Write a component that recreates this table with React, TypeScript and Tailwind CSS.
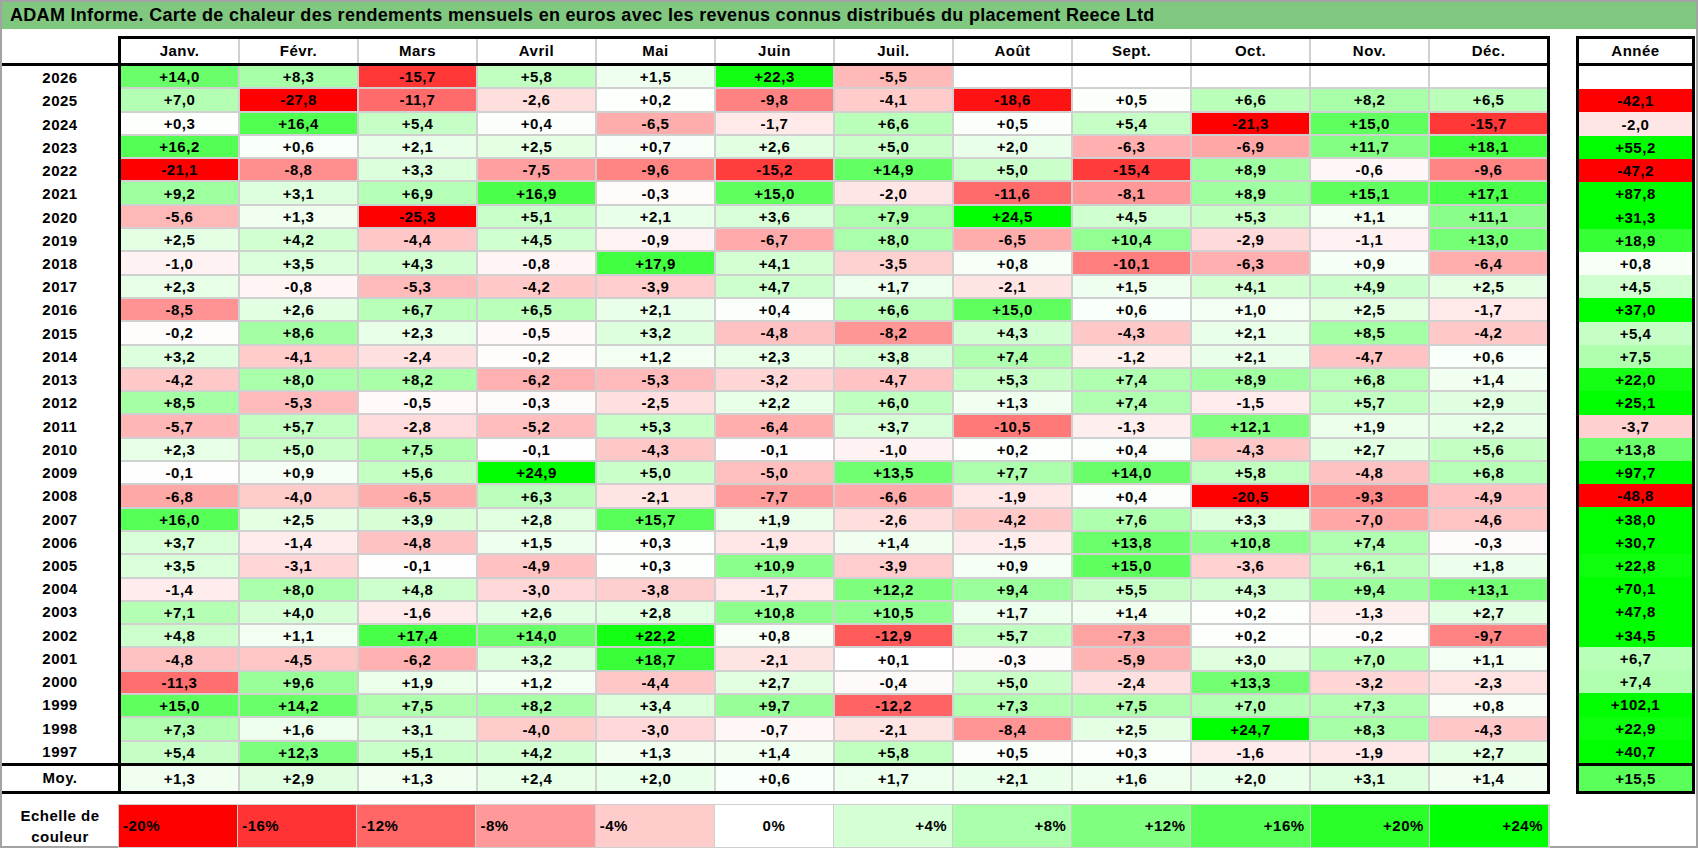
import React from "react";

const MONTHS = ["Janv.", "Févr.", "Mars", "Avril", "Mai", "Juin", "Juil.", "Août", "Sept.", "Oct.", "Nov.", "Déc."];

// year, 12 monthly values, yearly total (null = no data)
const ROWS: [string, (number | null)[], number | null][] = [
  ["2026", [14.0, 8.3, -15.7, 5.8, 1.5, 22.3, -5.5, null, null, null, null, null], null],
  ["2025", [7.0, -27.8, -11.7, -2.6, 0.2, -9.8, -4.1, -18.6, 0.5, 6.6, 8.2, 6.5], -42.1],
  ["2024", [0.3, 16.4, 5.4, 0.4, -6.5, -1.7, 6.6, 0.5, 5.4, -21.3, 15.0, -15.7], -2.0],
  ["2023", [16.2, 0.6, 2.1, 2.5, 0.7, 2.6, 5.0, 2.0, -6.3, -6.9, 11.7, 18.1], 55.2],
  ["2022", [-21.1, -8.8, 3.3, -7.5, -9.6, -15.2, 14.9, 5.0, -15.4, 8.9, -0.6, -9.6], -47.2],
  ["2021", [9.2, 3.1, 6.9, 16.9, -0.3, 15.0, -2.0, -11.6, -8.1, 8.9, 15.1, 17.1], 87.8],
  ["2020", [-5.6, 1.3, -25.3, 5.1, 2.1, 3.6, 7.9, 24.5, 4.5, 5.3, 1.1, 11.1], 31.3],
  ["2019", [2.5, 4.2, -4.4, 4.5, -0.9, -6.7, 8.0, -6.5, 10.4, -2.9, -1.1, 13.0], 18.9],
  ["2018", [-1.0, 3.5, 4.3, -0.8, 17.9, 4.1, -3.5, 0.8, -10.1, -6.3, 0.9, -6.4], 0.8],
  ["2017", [2.3, -0.8, -5.3, -4.2, -3.9, 4.7, 1.7, -2.1, 1.5, 4.1, 4.9, 2.5], 4.5],
  ["2016", [-8.5, 2.6, 6.7, 6.5, 2.1, 0.4, 6.6, 15.0, 0.6, 1.0, 2.5, -1.7], 37.0],
  ["2015", [-0.2, 8.6, 2.3, -0.5, 3.2, -4.8, -8.2, 4.3, -4.3, 2.1, 8.5, -4.2], 5.4],
  ["2014", [3.2, -4.1, -2.4, -0.2, 1.2, 2.3, 3.8, 7.4, -1.2, 2.1, -4.7, 0.6], 7.5],
  ["2013", [-4.2, 8.0, 8.2, -6.2, -5.3, -3.2, -4.7, 5.3, 7.4, 8.9, 6.8, 1.4], 22.0],
  ["2012", [8.5, -5.3, -0.5, -0.3, -2.5, 2.2, 6.0, 1.3, 7.4, -1.5, 5.7, 2.9], 25.1],
  ["2011", [-5.7, 5.7, -2.8, -5.2, 5.3, -6.4, 3.7, -10.5, -1.3, 12.1, 1.9, 2.2], -3.7],
  ["2010", [2.3, 5.0, 7.5, -0.1, -4.3, -0.1, -1.0, 0.2, 0.4, -4.3, 2.7, 5.6], 13.8],
  ["2009", [-0.1, 0.9, 5.6, 24.9, 5.0, -5.0, 13.5, 7.7, 14.0, 5.8, -4.8, 6.8], 97.7],
  ["2008", [-6.8, -4.0, -6.5, 6.3, -2.1, -7.7, -6.6, -1.9, 0.4, -20.5, -9.3, -4.9], -48.8],
  ["2007", [16.0, 2.5, 3.9, 2.8, 15.7, 1.9, -2.6, -4.2, 7.6, 3.3, -7.0, -4.6], 38.0],
  ["2006", [3.7, -1.4, -4.8, 1.5, 0.3, -1.9, 1.4, -1.5, 13.8, 10.8, 7.4, -0.3], 30.7],
  ["2005", [3.5, -3.1, -0.1, -4.9, 0.3, 10.9, -3.9, 0.9, 15.0, -3.6, 6.1, 1.8], 22.8],
  ["2004", [-1.4, 8.0, 4.8, -3.0, -3.8, -1.7, 12.2, 9.4, 5.5, 4.3, 9.4, 13.1], 70.1],
  ["2003", [7.1, 4.0, -1.6, 2.6, 2.8, 10.8, 10.5, 1.7, 1.4, 0.2, -1.3, 2.7], 47.8],
  ["2002", [4.8, 1.1, 17.4, 14.0, 22.2, 0.8, -12.9, 5.7, -7.3, 0.2, -0.2, -9.7], 34.5],
  ["2001", [-4.8, -4.5, -6.2, 3.2, 18.7, -2.1, 0.1, -0.3, -5.9, 3.0, 7.0, 1.1], 6.7],
  ["2000", [-11.3, 9.6, 1.9, 1.2, -4.4, 2.7, -0.4, 5.0, -2.4, 13.3, -3.2, -2.3], 7.4],
  ["1999", [15.0, 14.2, 7.5, 8.2, 3.4, 9.7, -12.2, 7.3, 7.5, 7.0, 7.3, 0.8], 102.1],
  ["1998", [7.3, 1.6, 3.1, -4.0, -3.0, -0.7, -2.1, -8.4, 2.5, 24.7, 8.3, -4.3], 22.9],
  ["1997", [5.4, 12.3, 5.1, 4.2, 1.3, 1.4, 5.8, 0.5, 0.3, -1.6, -1.9, 2.7], 40.7],
];

const AVG = [1.3, 2.9, 1.3, 2.4, 2.0, 0.6, 1.7, 2.1, 1.6, 2.0, 3.1, 1.4];
const AVG_YEAR = 15.5;

const SCALE = [-20, -16, -12, -8, -4, 0, 4, 8, 12, 16, 20, 24];

function heat(v: number | null): string {
  if (v === null) return "#ffffff";
  if (v >= 0) {
    const c = Math.round(255 * (1 - Math.min(v / 24, 1)));
    return `rgb(${c},255,${c})`;
  }
  const c = Math.round(255 * (1 - Math.min(-v / 20, 1)));
  return `rgb(255,${c},${c})`;
}

function fmt(v: number | null) {
  if (v === null) return "";
  return (v >= 0 ? "+" : "-") + Math.abs(v).toFixed(1).replace(".", ",");
}

function Cell({ v }: { v: number | null }) {
  return (
    <div className="min-h-0 flex items-center justify-center leading-none" style={{ background: heat(v) }}>
      {fmt(v)}
    </div>
  );
}

export default function App() {
  return (
    <div className="w-[1698px] h-[848px] border-2 border-[#a3a3a3] bg-white text-black font-['Liberation_Sans',Arial,sans-serif] font-bold text-[15px] tracking-[0.5px]">
      <div className="h-[27px] bg-[#80c880] flex items-center pl-[8px] text-[18px] tracking-[0.3px] whitespace-nowrap">
        ADAM Informe. Carte de chaleur des rendements mensuels en euros avec les revenus connus distribués du placement Reece Ltd
      </div>

      <div className="mt-[7px] flex">
        {/* monthly table */}
        <div className="w-[1548px]">
          <div className="flex h-[30px]">
            <div className="w-[116px] border-b-[3px] border-black" />
            <div className="flex-1 border-[3px] border-black grid grid-cols-12 gap-x-[2px] bg-[#d0d0d0]">
              {MONTHS.map((m) => (
                <div key={m} className="bg-white flex items-center justify-center">{m}</div>
              ))}
            </div>
          </div>

          <div className="flex h-[697px]">
            <div className="w-[116px] grid grid-rows-[repeat(30,minmax(0,1fr))]">
              {ROWS.map(([y]) => (
                <div key={y} className="flex items-center justify-center leading-none">{y}</div>
              ))}
            </div>
            <div className="flex-1 border-x-[3px] border-black grid grid-cols-12 grid-rows-[repeat(30,minmax(0,1fr))] gap-[2px] bg-[#d0d0d0]">
              {ROWS.map(([y, vals]) => vals.map((v, i) => <Cell key={y + i} v={v} />))}
            </div>
          </div>

          <div className="flex h-[31px]">
            <div className="w-[116px] border-y-[3px] border-black flex items-center justify-center">Moy.</div>
            <div className="flex-1 border-[3px] border-black grid grid-cols-12 gap-x-[2px] bg-[#d0d0d0]">
              {AVG.map((v, i) => <Cell key={i} v={v} />)}
            </div>
          </div>

          <div className="mt-[10px] flex h-[44px]">
            <div className="w-[116px] flex flex-col items-center justify-center leading-[21px]">
              <span>Echelle de</span>
              <span>couleur</span>
            </div>
            <div className="flex-1 grid grid-cols-12 border border-[#cfcfcf]">
              {SCALE.map((s) => (
                <div
                  key={s}
                  className={`flex items-center border-r border-[#cfcfcf] ${s < 0 ? "justify-start pl-[4px]" : s === 0 ? "justify-center" : "justify-end pr-[5px]"}`}
                  style={{ background: heat(s) }}
                >
                  {s > 0 ? `+${s}%` : `${s}%`}
                </div>
              ))}
            </div>
          </div>
        </div>

        {/* yearly column */}
        <div className="ml-[26px] w-[119px]">
          <div className="h-[30px] border-[3px] border-black flex items-center justify-center">Année</div>
          <div className="h-[697px] border-x-[3px] border-black grid grid-rows-[repeat(30,minmax(0,1fr))]">
            {ROWS.map(([y, , total]) => <Cell key={y} v={total} />)}
          </div>
          <div className="h-[31px] border-[3px] border-black grid">
            <Cell v={AVG_YEAR} />
          </div>
        </div>
      </div>
    </div>
  );
}
